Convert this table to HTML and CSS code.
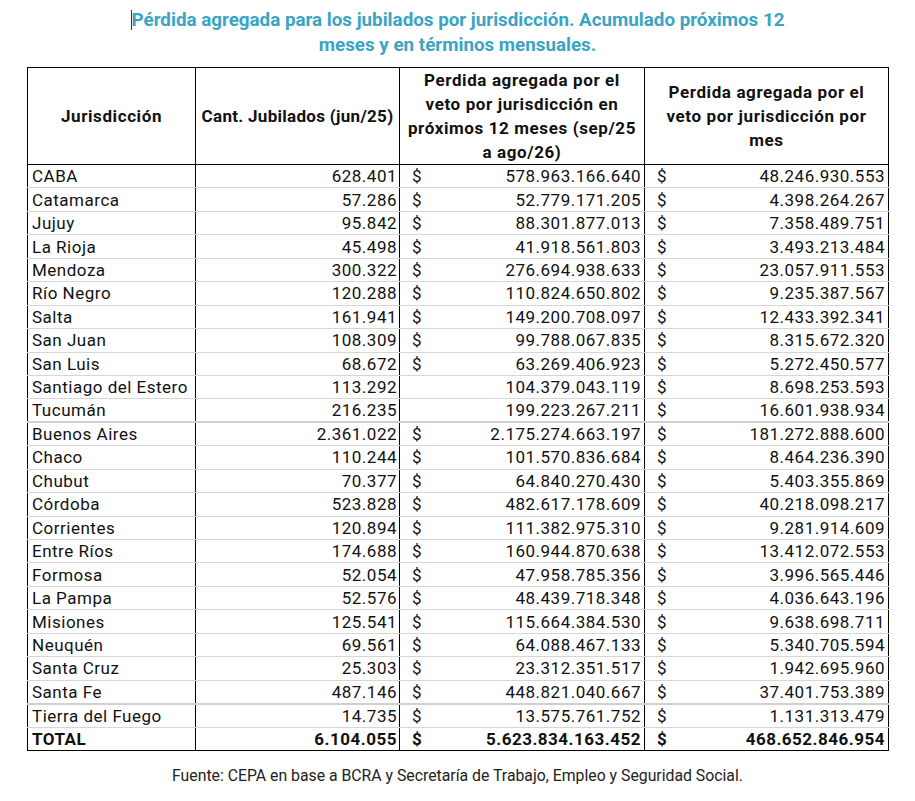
FILE: index.html
```html
<!DOCTYPE html>
<html lang="es">
<head>
<meta charset="utf-8">
<title>Pérdida agregada</title>
<link rel="stylesheet" href="styles.css">
</head>
<body>
<div class="page">
  <h1 class="title"><span class="caret"></span>Pérdida agregada para los jubilados por jurisdicción. Acumulado próximos 12<br>meses y en términos mensuales.</h1>
  <table class="data">
    <colgroup>
      <col class="c1"><col class="c2"><col class="c3"><col class="c4">
    </colgroup>
    <thead>
      <tr>
        <th>Jurisdicción</th>
        <th class="single">Cant. Jubilados (jun/25)</th>
        <th>Perdida agregada por el veto por jurisdicción en próximos 12 meses (sep/25 a ago/26)</th>
        <th>Perdida agregada por el veto por jurisdicción por mes</th>
      </tr>
    </thead>
    <tbody>
      <tr><td>CABA</td><td class="num">628.401</td><td class="money"><span class="cur">$</span><span>578.963.166.640</span></td><td class="money"><span class="cur">$</span><span>48.246.930.553</span></td></tr>
      <tr><td>Catamarca</td><td class="num">57.286</td><td class="money"><span class="cur">$</span><span>52.779.171.205</span></td><td class="money"><span class="cur">$</span><span>4.398.264.267</span></td></tr>
      <tr><td>Jujuy</td><td class="num">95.842</td><td class="money"><span class="cur">$</span><span>88.301.877.013</span></td><td class="money"><span class="cur">$</span><span>7.358.489.751</span></td></tr>
      <tr><td>La Rioja</td><td class="num">45.498</td><td class="money"><span class="cur">$</span><span>41.918.561.803</span></td><td class="money"><span class="cur">$</span><span>3.493.213.484</span></td></tr>
      <tr><td>Mendoza</td><td class="num">300.322</td><td class="money"><span class="cur">$</span><span>276.694.938.633</span></td><td class="money"><span class="cur">$</span><span>23.057.911.553</span></td></tr>
      <tr><td>Río Negro</td><td class="num">120.288</td><td class="money"><span class="cur">$</span><span>110.824.650.802</span></td><td class="money"><span class="cur">$</span><span>9.235.387.567</span></td></tr>
      <tr><td>Salta</td><td class="num">161.941</td><td class="money"><span class="cur">$</span><span>149.200.708.097</span></td><td class="money"><span class="cur">$</span><span>12.433.392.341</span></td></tr>
      <tr><td>San Juan</td><td class="num">108.309</td><td class="money"><span class="cur">$</span><span>99.788.067.835</span></td><td class="money"><span class="cur">$</span><span>8.315.672.320</span></td></tr>
      <tr><td>San Luis</td><td class="num">68.672</td><td class="money"><span class="cur">$</span><span>63.269.406.923</span></td><td class="money"><span class="cur">$</span><span>5.272.450.577</span></td></tr>
      <tr><td>Santiago del Estero</td><td class="num">113.292</td><td class="money"><span class="cur"></span><span>104.379.043.119</span></td><td class="money"><span class="cur">$</span><span>8.698.253.593</span></td></tr>
      <tr><td>Tucumán</td><td class="num">216.235</td><td class="money"><span class="cur"></span><span>199.223.267.211</span></td><td class="money"><span class="cur">$</span><span>16.601.938.934</span></td></tr>
      <tr class="thick"><td>Buenos Aires</td><td class="num">2.361.022</td><td class="money"><span class="cur">$</span><span>2.175.274.663.197</span></td><td class="money"><span class="cur">$</span><span>181.272.888.600</span></td></tr>
      <tr><td>Chaco</td><td class="num">110.244</td><td class="money"><span class="cur">$</span><span>101.570.836.684</span></td><td class="money"><span class="cur">$</span><span>8.464.236.390</span></td></tr>
      <tr><td>Chubut</td><td class="num">70.377</td><td class="money"><span class="cur">$</span><span>64.840.270.430</span></td><td class="money"><span class="cur">$</span><span>5.403.355.869</span></td></tr>
      <tr><td>Córdoba</td><td class="num">523.828</td><td class="money"><span class="cur">$</span><span>482.617.178.609</span></td><td class="money"><span class="cur">$</span><span>40.218.098.217</span></td></tr>
      <tr><td>Corrientes</td><td class="num">120.894</td><td class="money"><span class="cur">$</span><span>111.382.975.310</span></td><td class="money"><span class="cur">$</span><span>9.281.914.609</span></td></tr>
      <tr><td>Entre Ríos</td><td class="num">174.688</td><td class="money"><span class="cur">$</span><span>160.944.870.638</span></td><td class="money"><span class="cur">$</span><span>13.412.072.553</span></td></tr>
      <tr><td>Formosa</td><td class="num">52.054</td><td class="money"><span class="cur">$</span><span>47.958.785.356</span></td><td class="money"><span class="cur">$</span><span>3.996.565.446</span></td></tr>
      <tr><td>La Pampa</td><td class="num">52.576</td><td class="money"><span class="cur">$</span><span>48.439.718.348</span></td><td class="money"><span class="cur">$</span><span>4.036.643.196</span></td></tr>
      <tr><td>Misiones</td><td class="num">125.541</td><td class="money"><span class="cur">$</span><span>115.664.384.530</span></td><td class="money"><span class="cur">$</span><span>9.638.698.711</span></td></tr>
      <tr><td>Neuquén</td><td class="num">69.561</td><td class="money"><span class="cur">$</span><span>64.088.467.133</span></td><td class="money"><span class="cur">$</span><span>5.340.705.594</span></td></tr>
      <tr><td>Santa Cruz</td><td class="num">25.303</td><td class="money"><span class="cur">$</span><span>23.312.351.517</span></td><td class="money"><span class="cur">$</span><span>1.942.695.960</span></td></tr>
      <tr><td>Santa Fe</td><td class="num">487.146</td><td class="money"><span class="cur">$</span><span>448.821.040.667</span></td><td class="money"><span class="cur">$</span><span>37.401.753.389</span></td></tr>
      <tr class="thick"><td>Tierra del Fuego</td><td class="num">14.735</td><td class="money"><span class="cur">$</span><span>13.575.761.752</span></td><td class="money"><span class="cur">$</span><span>1.131.313.479</span></td></tr>
      <tr class="total"><td>TOTAL</td><td class="num">6.104.055</td><td class="money"><span class="cur">$</span><span>5.623.834.163.452</span></td><td class="money"><span class="cur">$</span><span>468.652.846.954</span></td></tr>
    </tbody>
  </table>
  <p class="source">Fuente: CEPA en base a BCRA y Secretaría de Trabajo, Empleo y Seguridad Social.</p>
</div>
</body>
</html>
```

FILE: styles.css
```css
* { box-sizing: border-box; }
html, body { margin: 0; padding: 0; background: #ffffff; }
body { font-family: Roboto, "Liberation Sans", sans-serif; color: #111111; }

.page { width: 915px; padding: 8px 0 0 0; }

.title {
  margin: 0;
  text-align: center;
  font-size: 18.8px;
  font-weight: 700;
  line-height: 25px;
  color: #3aa4c4;
  letter-spacing: 0;
}
.caret {
  display: inline-block;
  width: 1px;
  height: 20px;
  background: #333333;
  vertical-align: -4px;
}

.data {
  margin: 9px 0 0 27px;
  width: 861px;
  border-collapse: collapse;
  table-layout: fixed;
  border: 1px solid #000000;
  font-size: 17px;
  letter-spacing: 0.5px;
}
.c1 { width: 168px; }
.c2 { width: 204px; }
.c3 { width: 245px; }
.c4 { width: 244px; }

.data th {
  height: 95px;
  font-size: 17px;
  font-weight: 700;
  line-height: 24px;
  text-align: center;
  vertical-align: middle;
  padding: 0 5px;
  border-left: 1px solid #000000;
  border-right: 1px solid #000000;
  border-bottom: 1px solid #000000;
  letter-spacing: 0.6px;
}
.data th.single {
  padding: 0;
  white-space: nowrap;
  letter-spacing: 0.3px;
}
.data td {
  height: 23.45px;
  padding: 0 2px 0 4px;
  line-height: 20px;
  border-left: 1px solid #000000;
  border-right: 1px solid #000000;
  border-bottom: 1px solid #d6d6d6;
  white-space: nowrap;
  vertical-align: middle;
}
.data .num { text-align: right; }
.data .money { padding: 0 3px 0 12px; }
.money .cur { float: left; }
.money span:last-child { float: right; }

.data tr.thick td { border-top: 2px solid #d0d0d0; }
.data tr.total td {
  font-weight: 700;
  border-top: 1px solid #000000;
  border-bottom: 1px solid #000000;
}

.source {
  margin: 16px 0 0 0;
  text-align: center;
  font-size: 15.8px;
  line-height: 18px;
  color: #222222;
}
```
